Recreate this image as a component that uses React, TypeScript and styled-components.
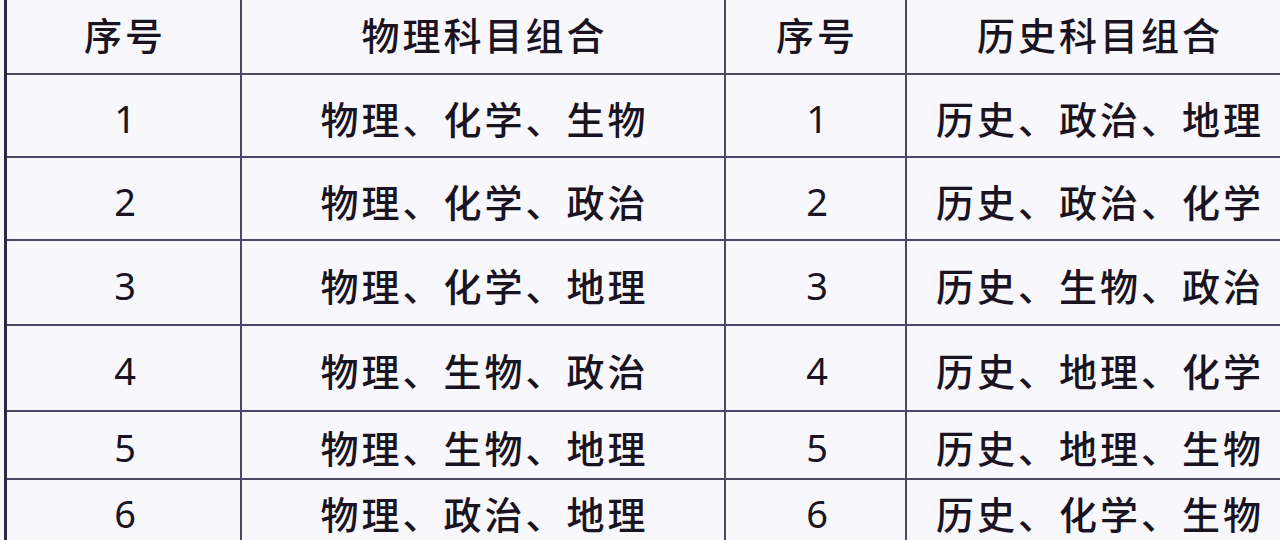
import React from "react";
import styled, { createGlobalStyle } from "styled-components";

const Global = createGlobalStyle`
  html, body {
    margin: 0;
    padding: 0;
    background: #f8f8fc;
    overflow: hidden;
  }
  body {
    font-family: "Noto Sans CJK SC", "Noto Sans", sans-serif;
    color: #1c1524;
  }
`;

const Page = styled.div`
  width: 1280px;
  height: 540px;
  overflow: hidden;
  padding-left: 4px;
  box-sizing: border-box;
`;

const Table = styled.div`
  display: grid;
  grid-template-columns: 235px 484px 181px 383px;
  border-left: 3px solid #2d2740;
  width: max-content;
`;

const Cell = styled.div<{ $h: number; $shift: number; $last?: boolean }>`
  height: ${(p) => p.$h}px;
  box-sizing: border-box;
  display: flex;
  align-items: center;
  justify-content: center;
  padding-top: ${(p) => Math.max(p.$shift, 0)}px;
  padding-bottom: ${(p) => Math.max(-p.$shift, 0)}px;
  border-bottom: 2px solid #4e4763;
  border-right: ${(p) => (p.$last ? "none" : "2px solid #4e4763")};
  font-size: 38px;
  font-weight: 500;
  line-height: 1;
  letter-spacing: 3px;
  text-indent: 3px;
  white-space: nowrap;
  color: #1a1322;
`;

const Num = styled.span`
  font-family: "Noto Sans", "Open Sans", sans-serif;
  font-weight: 400;
  font-size: 38px;
  letter-spacing: 0;
`;

const header = ["序号", "物理科目组合", "序号", "历史科目组合"];
const rows: [string, string][] = [
  ["物理、化学、生物", "历史、政治、地理"],
  ["物理、化学、政治", "历史、政治、化学"],
  ["物理、化学、地理", "历史、生物、政治"],
  ["物理、生物、政治", "历史、地理、化学"],
  ["物理、生物、地理", "历史、地理、生物"],
  ["物理、政治、地理", "历史、化学、生物"],
];
const heights = [83, 83, 85, 86, 68, 80];
const shifts = [4, 4, 4, 4, 4, -12];

export default function App() {
  return (
    <>
      <Global />
      <Page>
        <Table>
          {header.map((h, i) => (
            <Cell key={"h" + i} $h={75} $shift={-6} $last={i === 3}>
              {h}
            </Cell>
          ))}
          {rows.map((r, i) => (
            <React.Fragment key={i}>
              <Cell $h={heights[i]} $shift={shifts[i]}>
                <Num>{i + 1}</Num>
              </Cell>
              <Cell $h={heights[i]} $shift={shifts[i]}>
                {r[0]}
              </Cell>
              <Cell $h={heights[i]} $shift={shifts[i]}>
                <Num>{i + 1}</Num>
              </Cell>
              <Cell $h={heights[i]} $shift={shifts[i]} $last>
                {r[1]}
              </Cell>
            </React.Fragment>
          ))}
        </Table>
      </Page>
    </>
  );
}
